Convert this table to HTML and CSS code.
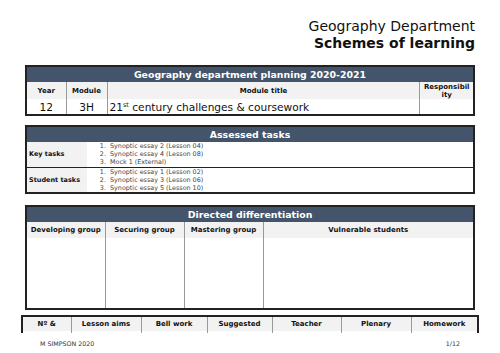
FILE: index.html
```html
<!DOCTYPE html>
<html>
<head>
<meta charset="utf-8">
<link rel="stylesheet" href="styles.css">
</head>
<body>
<div class="page">
  <header class="title">
    <div class="dept">Geography Department</div>
    <div class="sol">Schemes of learning</div>
  </header>

  <table class="box t1">
    <colgroup><col class="c-year"><col class="c-mod"><col><col class="c-resp"></colgroup>
    <tr><th class="band" colspan="4">Geography department planning 2020-2021</th></tr>
    <tr class="sub"><th>Year</th><th>Module</th><th>Module title</th><th class="resp">Responsibility</th></tr>
    <tr class="data"><td class="mid">12</td><td class="mid">3H</td><td>21<sup>st</sup> century challenges &amp; coursework</td><td></td></tr>
  </table>

  <table class="box t2">
    <colgroup><col class="c-label"><col></colgroup>
    <tr><th class="band" colspan="2">Assessed tasks</th></tr>
    <tr class="task">
      <th class="label">Key tasks</th>
      <td><ol><li>Synoptic essay 2 (Lesson 04)</li><li>Synoptic essay 4 (Lesson 08)</li><li>Mock 1 (External)</li></ol></td>
    </tr>
    <tr class="task">
      <th class="label">Student tasks</th>
      <td><ol><li>Synoptic essay 1 (Lesson 02)</li><li>Synoptic essay 3 (Lesson 06)</li><li>Synoptic essay 5 (Lesson 10)</li></ol></td>
    </tr>
  </table>

  <table class="box t3">
    <colgroup><col class="c-grp"><col class="c-grp"><col class="c-grp"><col></colgroup>
    <tr><th class="band" colspan="4">Directed differentiation</th></tr>
    <tr class="sub"><th>Developing group</th><th>Securing group</th><th>Mastering group</th><th>Vulnerable students</th></tr>
    <tr class="blank"><td></td><td></td><td></td><td></td></tr>
  </table>

  <table class="t4">
    <colgroup><col class="w49"><col class="w70"><col class="w66"><col class="w65"><col class="w69"><col class="w70"><col></colgroup>
    <tr class="sub"><th>Nº &amp;</th><th>Lesson aims</th><th>Bell work</th><th>Suggested</th><th>Teacher</th><th>Plenary</th><th>Homework</th></tr>
    <tr class="stub"><td></td><td></td><td></td><td></td><td></td><td></td><td></td></tr>
  </table>

  <footer class="foot">
    <span>M SIMPSON 2020</span>
    <span>1/12</span>
  </footer>
</div>
</body>
</html>
```
FILE: styles.css
```css
* { box-sizing: border-box; }
html, body { margin: 0; padding: 0; background: #fff; }
body { font-family: "DejaVu Sans", "Liberation Sans", sans-serif; color: #111; }
.page { width: 500px; height: 353px; overflow: hidden; padding: 18px 25px 0 25px; }

.title { text-align: right; margin-bottom: 13px; }
.dept { font-size: 14px; line-height: 17px; }
.sol { font-size: 14px; line-height: 17px; font-weight: bold; }

table { border-collapse: collapse; table-layout: fixed; width: 450px; }
.box { border: 2px solid #222; }
th, td { padding: 0; }

.band { background: #44546a; color: #fff; font-size: 9.4px; font-weight: bold; height: 16px; line-height: 14px; text-align: center; }

.sub th { background: #f2f2f2; font-size: 7px; font-weight: bold; text-align: center; border-left: 1px solid #999; line-height: 8px; vertical-align: middle; }
.sub th:first-child { border-left: none; }

.t1 { margin-bottom: 9px; }
.c-year { width: 40px; }
.c-mod { width: 41px; }
.c-resp { width: 54px; }
.t1 .sub th { height: 17px; }
.t1 .sub th.resp { word-break: break-all; vertical-align: top; padding: 1px 3px 0 3px; }
.data td { font-size: 10.6px; height: 16px; border-left: 1px solid #999; padding-left: 2px; line-height: 14px; }
.data td:first-child { border-left: none; }
.data td.mid { text-align: center; padding-left: 0; }
.data sup { font-size: 6.5px; line-height: 0; vertical-align: 4px; }

.t2 { margin-bottom: 11px; }
.c-label { width: 61px; }
.task + .task { border-top: 1px solid #222; }
.label { background: #f2f2f2; font-size: 6.5px; font-weight: bold; text-align: left; padding-left: 2px; }
.task td { font-size: 6.4px; color: #444; height: 25px; vertical-align: middle; }
.task ol { margin: 0; padding-left: 21px; }
.task li { line-height: 8.2px; padding-left: 2px; }

.t3 { margin-bottom: 5px; }
.c-grp { width: 79px; }
.t3 .sub th { height: 16px; }
.blank td { height: 71px; border-left: 1px solid #999; }
.blank td:first-child { border-left: none; }

.t4 { width: 458px; margin-left: -4px; border: 2px solid #222; border-bottom: none; }
.w49 { width: 49px; }
.w70 { width: 70px; }
.w66 { width: 66px; }
.w65 { width: 65px; }
.w69 { width: 69px; }
.t4 .sub th { height: 15px; border-left: 1px solid #999; }
.t4 .sub th:first-child { border-left: none; }
.t4 .stub td { height: 2px; border-left: 1px solid #999; }
.t4 .stub td:first-child { border-left: none; }

.foot { display: flex; justify-content: space-between; font-size: 6.3px; color: #333; padding: 7px 15px 0 15px; }
```
